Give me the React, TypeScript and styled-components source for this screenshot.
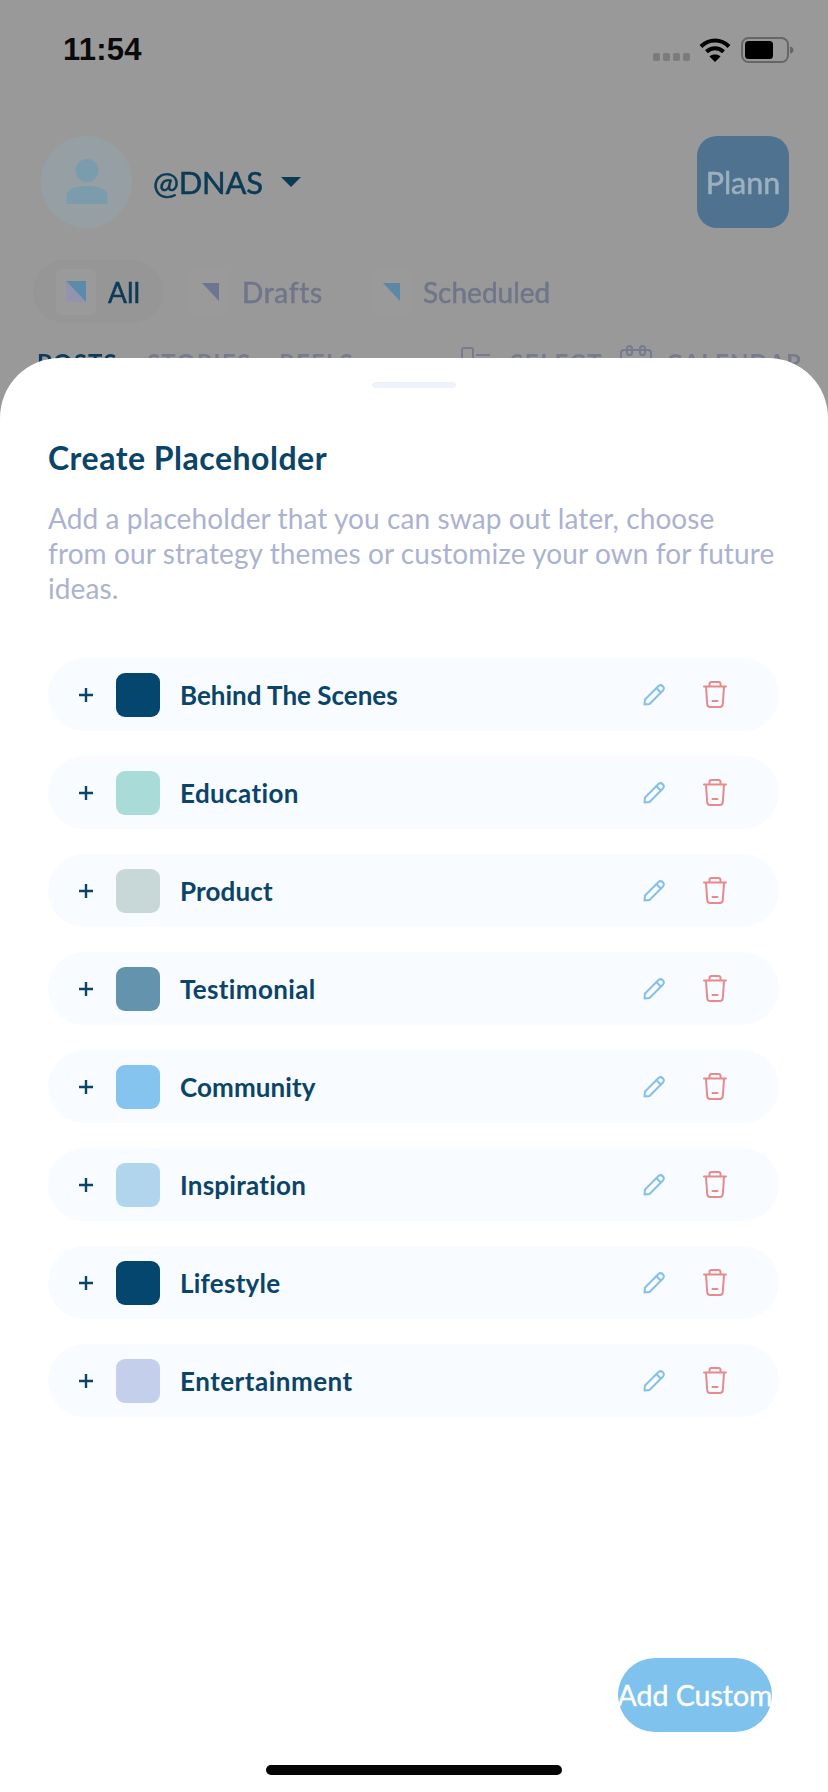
import React from "react";
import styled, { createGlobalStyle } from "styled-components";

const Global = createGlobalStyle`
  html, body { margin: 0; padding: 0; background: #fff; }
  #root { width: 828px; height: 1792px; }
  * { box-sizing: border-box; }
`;

const FONT = `"Lato", "Noto Sans", sans-serif`;

const Phone = styled.div`
  position: relative;
  width: 828px;
  height: 1792px;
  overflow: hidden;
  background: #999999;
  font-family: ${FONT};
`;

const StatusBar = styled.div`
  height: 99px;
  display: flex;
  align-items: center;
  justify-content: space-between;
  padding: 0 34px 0 63px;
`;

const Clock = styled.div`
  font-family: "Liberation Sans", sans-serif;
  font-weight: 700;
  font-size: 31px;
  letter-spacing: 0.2px;
  color: #0a0a0a;
`;

const StatusIcons = styled.div`
  display: flex;
  align-items: center;
`;

const SignalDots = styled.div`
  display: flex;
  gap: 3px;
  margin: 14px 9px 0 0;
`;

const SignalDot = styled.span`
  width: 7px;
  height: 8px;
  border-radius: 2px;
  background: #7b7b7b;
`;

const Backdrop = styled.div`
  filter: blur(0.5px);
`;

const ProfileRow = styled.div`
  margin-top: 37px;
  height: 92px;
  display: flex;
  align-items: center;
  padding: 0 39px 0 41px;
`;

const Avatar = styled.div`
  width: 91px;
  height: 92px;
  border-radius: 50%;
  background: #96a0a4;
  display: flex;
  align-items: center;
  justify-content: center;
`;

const Handle = styled.div`
  margin-left: 21px;
  font-size: 31px;
  font-weight: 400;
  -webkit-text-stroke: 0.5px currentColor;
  letter-spacing: -0.2px;
  color: #0b3a55;
`;

const Caret = styled.span`
  margin-left: 18px;
  width: 0;
  height: 0;
  border-left: 10px solid transparent;
  border-right: 10px solid transparent;
  border-top: 10px solid #0b3a55;
`;

const PlannButton = styled.div`
  margin-left: auto;
  width: 92px;
  height: 92px;
  border-radius: 20px;
  background: #4e7290;
  display: flex;
  align-items: center;
  justify-content: center;
  font-size: 30.5px;
  font-weight: 400;
  -webkit-text-stroke: 0.5px currentColor;
  color: #9cb0bd;
`;

const ChipRow = styled.div`
  margin-top: 32px;
  height: 63px;
  display: flex;
  align-items: center;
  padding-left: 33px;
`;

const Chip = styled.div<{ $active?: boolean; $width: number; $pad: number }>`
  width: ${(p) => p.$width}px;
  height: 63px;
  border-radius: 32px;
  display: flex;
  align-items: center;
  gap: 12px;
  padding-left: ${(p) => p.$pad}px;
  background: ${(p) => (p.$active ? "#969696" : "transparent")};
`;

const IconTile = styled.div`
  width: 40px;
  height: 46px;
  flex: none;
  border-radius: 6px;
  background: #9a9a9a;
  display: flex;
  align-items: center;
  justify-content: center;
`;

const ChipLabel = styled.span<{ $active?: boolean; $track?: number }>`
  font-size: 28px;
  font-weight: 400;
  -webkit-text-stroke: 0.5px currentColor;
  letter-spacing: ${(p) => p.$track ?? 0}px;
  color: ${(p) => (p.$active ? "#0c3a58" : "#6f7689")};
`;

const TabRow = styled.div`
  margin-top: 28px;
  display: flex;
  align-items: flex-start;
  padding: 0 26px 0 37px;
  font-size: 24px;
  font-weight: 700;
`;

const Tab = styled.span<{ $active?: boolean; $gap: number; $track?: number }>`
  margin-left: ${(p) => p.$gap}px;
  letter-spacing: ${(p) => p.$track ?? 1.2}px;
  color: ${(p) => (p.$active ? "#0c3a58" : "#767b8e")};
  line-height: 24px;
`;

const SelectGlyph = styled.svg`
  flex: none;
  margin: -4px 0 0 107px;
`;

const CalendarGlyph = styled.svg`
  flex: none;
  margin: -6px 0 0 17px;
`;

const Sheet = styled.div`
  position: absolute;
  left: 0;
  right: 0;
  top: 358px;
  bottom: 0;
  background: #ffffff;
  border-radius: 60px 60px 0 0;
  padding: 24px 48px 17px;
  display: flex;
  flex-direction: column;
`;

const Grabber = styled.div`
  align-self: center;
  width: 84px;
  height: 6px;
  border-radius: 3px;
  background: #eef2fa;
`;

const Title = styled.h1`
  margin: 51px 0 0;
  font-size: 32px;
  line-height: 38px;
  font-weight: 700;
  letter-spacing: 0.5px;
  color: #0a4468;
`;

const Description = styled.p`
  margin: 24px 0 0;
  font-size: 28px;
  line-height: 35px;
  font-weight: 400;
  letter-spacing: 0.1px;
  color: #abb2d0;
`;

const List = styled.div`
  margin-top: 52px;
  width: 731px;
  display: flex;
  flex-direction: column;
  gap: 25px;
`;

const Row = styled.div`
  height: 73px;
  border-radius: 37px;
  background: #f8fbff;
  display: flex;
  align-items: center;
  padding-left: 31px;
`;

const Swatch = styled.div<{ $color: string }>`
  width: 44px;
  height: 44px;
  margin-left: 23px;
  border-radius: 9px;
  background: ${(p) => p.$color};
`;

const Label = styled.div<{ $track: number }>`
  margin-left: 20px;
  font-size: 26px;
  font-weight: 700;
  letter-spacing: ${(p) => p.$track}px;
  color: #0a4468;
`;

const RowActions = styled.div`
  margin-left: auto;
  margin-right: 52px;
  display: flex;
  align-items: center;
  gap: 38px;
`;

const AddCustom = styled.div`
  margin-top: auto;
  align-self: flex-end;
  margin-right: 8px;
  width: 154px;
  height: 74px;
  border-radius: 37px;
  background: #7fc2ee;
  color: #ffffff;
  font-size: 28.5px;
  font-weight: 400;
  -webkit-text-stroke: 0.4px currentColor;
  white-space: nowrap;
  display: flex;
  align-items: center;
  justify-content: center;
`;

const HomeIndicator = styled.div`
  align-self: center;
  margin-top: 33px;
  width: 296px;
  height: 10px;
  border-radius: 5px;
  background: #050505;
`;

const Wifi = () => (
  <svg width="32" height="25" viewBox="0 0 32 25">
    <path d="M2 9.5C10 1.5 22 1.5 30 9.5" fill="none" stroke="#000" strokeWidth="4" />
    <path d="M7.5 14.8C12.5 10 19.5 10 24.5 14.8" fill="none" stroke="#000" strokeWidth="4" />
    <path d="M16 25L10.5 19.4C13.5 16.8 18.5 16.8 21.5 19.4Z" fill="#000" />
  </svg>
);

const Battery = () => (
  <svg width="53" height="26" viewBox="0 0 53 26" style={{ marginLeft: 10 }}>
    <rect x="1" y="1" width="46" height="24" rx="6.5" fill="none" stroke="#666" strokeWidth="2" />
    <rect x="4" y="4" width="28" height="18" rx="3.5" fill="#000" />
    <path d="M49 9.5C51.5 10 52.5 11.5 52.5 13S51.5 16 49 16.5Z" fill="#666" />
  </svg>
);

const Person = () => (
  <svg width="42" height="46" viewBox="0 0 42 46">
    <ellipse cx="21" cy="11.5" rx="11.5" ry="11.5" fill="#7a9cad" />
    <path d="M0.5 45V37C0.5 31 8 27 21 27S41.5 31 41.5 37V45Z" fill="#7a9cad" />
  </svg>
);

const Pencil = () => (
  <svg width="22" height="22" viewBox="0 0 22 22" fill="none" stroke="#85bfe8" strokeWidth="2" strokeLinejoin="round" strokeLinecap="round">
    <path d="M1.5 20.5L2 15.5L15.5 2C16.8 0.9 18.5 1 19.8 2.2C21 3.4 21 5.2 20 6.5L6.5 20Z" />
    <path d="M13.5 4.2L17.8 8.5" />
  </svg>
);

const Trash = () => (
  <svg width="24" height="27" viewBox="0 0 24 27" fill="none" stroke="#e88a8a" strokeWidth="2" strokeLinejoin="round" strokeLinecap="round">
    <path d="M1 5.5H23" />
    <path d="M6.5 5V3C6.5 1.8 7.3 1 8.5 1H15.5C16.7 1 17.5 1.8 17.5 3V5" />
    <path d="M3 6L4.2 23C4.3 24.8 5.4 26 7.2 26H16.8C18.6 26 19.7 24.8 19.8 23L21 6" />
    <path d="M9.5 20H14.5" />
  </svg>
);

const Plus = () => (
  <svg width="14" height="14" viewBox="0 0 14 14" stroke="#0a4468" strokeWidth="2.4" style={{ flex: "none" }}>
    <path d="M0 7H14M7 0V14" />
  </svg>
);

const ITEMS = [
  { name: "Behind The Scenes", color: "#05466f", track: 0 },
  { name: "Education", color: "#a9dbd9", track: 0.4 },
  { name: "Product", color: "#c8d7d8", track: 0.15 },
  { name: "Testimonial", color: "#6494ad", track: 0.35 },
  { name: "Community", color: "#84c4ef", track: 0.1 },
  { name: "Inspiration", color: "#b0d5ed", track: 0.25 },
  { name: "Lifestyle", color: "#05466f", track: 0.25 },
  { name: "Entertainment", color: "#c3cfeb", track: 0.5 },
];

export default function App() {
  return (
    <>
      <Global />
      <Phone>
        <StatusBar>
          <Clock>11:54</Clock>
          <StatusIcons>
            <SignalDots>
              <SignalDot />
              <SignalDot />
              <SignalDot />
              <SignalDot />
            </SignalDots>
            <Wifi />
            <Battery />
          </StatusIcons>
        </StatusBar>
        <Backdrop>
          <ProfileRow>
            <Avatar>
              <Person />
            </Avatar>
            <Handle>@DNAS</Handle>
            <Caret />
            <PlannButton>Plann</PlannButton>
          </ProfileRow>
          <ChipRow>
            <Chip $active $width={130} $pad={23}>
              <IconTile>
                <svg width="20" height="21" viewBox="0 0 20 21">
                  <path d="M0 0H20V21Z" fill="#5b8bab" />
                  <path d="M0 0L20 21H0Z" fill="#9393ad" />
                </svg>
              </IconTile>
              <ChipLabel $active>All</ChipLabel>
            </Chip>
            <Chip $width={208} $pad={27}>
              <IconTile>
                <svg width="17" height="18" viewBox="0 0 17 18">
                  <path d="M0 0H17V18Z" fill="#6e7590" />
                </svg>
              </IconTile>
              <ChipLabel $track={0.7}>Drafts</ChipLabel>
            </Chip>
            <Chip $width={200} $pad={0}>
              <IconTile>
                <svg width="17" height="18" viewBox="0 0 17 18">
                  <path d="M0 0H17V18Z" fill="#5a88a5" />
                </svg>
              </IconTile>
              <ChipLabel>Scheduled</ChipLabel>
            </Chip>
          </ChipRow>
          <TabRow>
            <Tab $active $gap={0}>POSTS</Tab>
            <Tab $gap={29}>STORIES</Tab>
            <Tab $gap={28}>REELS</Tab>
            <SelectGlyph width="30" height="24" viewBox="0 0 30 24" fill="none" stroke="#767b8e" strokeWidth="2">
              <rect x="1" y="1" width="11" height="20" rx="2" />
              <path d="M15 8H29" />
            </SelectGlyph>
            <Tab $gap={19} $track={1.7}>SELECT</Tab>
            <CalendarGlyph width="32" height="24" viewBox="0 0 32 24" fill="none" stroke="#767b8e" strokeWidth="2">
              <rect x="1" y="5" width="30" height="18" rx="3" />
              <rect x="7" y="1" width="5" height="9" rx="2.5" />
              <rect x="20" y="1" width="5" height="9" rx="2.5" />
            </CalendarGlyph>
            <Tab $gap={14}>CALENDAR</Tab>
          </TabRow>
        </Backdrop>
        <Sheet>
          <Grabber />
          <Title>Create Placeholder</Title>
          <Description>
            Add a placeholder that you can swap out later, choose
            <br />
            from our strategy themes or customize your own for future
            <br />
            ideas.
          </Description>
          <List>
            {ITEMS.map((item) => (
              <Row key={item.name}>
                <Plus />
                <Swatch $color={item.color} />
                <Label $track={item.track}>{item.name}</Label>
                <RowActions>
                  <Pencil />
                  <Trash />
                </RowActions>
              </Row>
            ))}
          </List>
          <AddCustom>Add Custom</AddCustom>
          <HomeIndicator />
        </Sheet>
      </Phone>
    </>
  );
}
